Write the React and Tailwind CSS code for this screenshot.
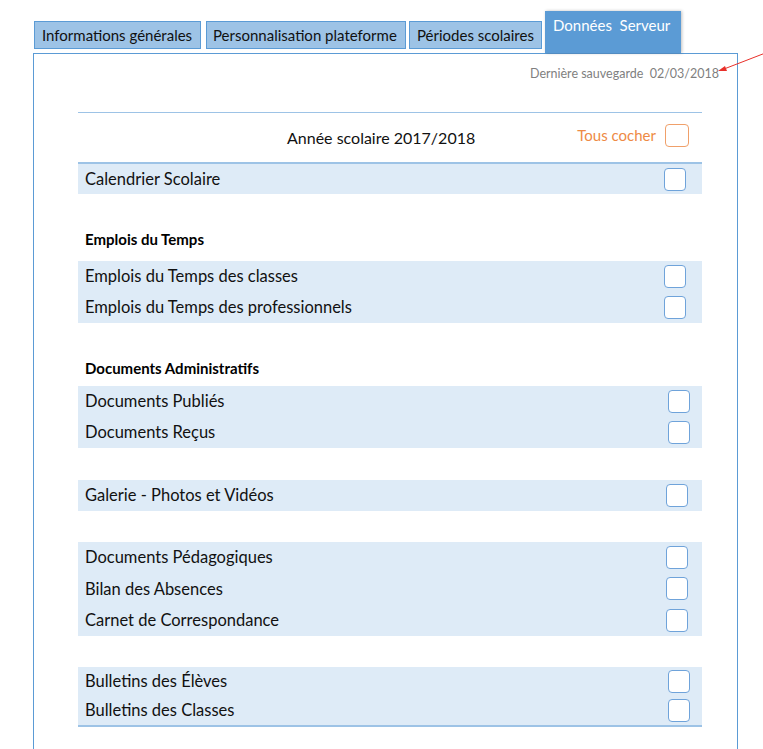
import React from "react";

const F = { fontFamily: "Lato, 'Liberation Sans', sans-serif" };

function Box({ orange = false, cls = "" }) {
  return (
    <div
      className={
        "shrink-0 rounded-[4px] bg-white " +
        (orange
          ? "w-[24px] h-[23px] border-[1.5px] border-[#f0a06a]"
          : "w-[22px] h-[23px] border-[1.5px] border-[#6fa3da]") +
        " " +
        cls
      }
    />
  );
}

function Row({ label, h = "h-[31px]", pr = "pr-[16px]" }) {
  return (
    <div className={"flex items-center justify-between pl-[7px] " + h + " " + pr}>
      <span className="text-[16.5px] text-[#111] leading-none">{label}</span>
      <Box />
    </div>
  );
}

function Block({ children, cls = "" }) {
  return <div className={"bg-[#deebf7] " + cls}>{children}</div>;
}

function Label({ children, pb }) {
  return (
    <div className={"pt-[37px] pl-[7px] " + pb}>
      <div className="h-[16px] flex items-center text-[15px] font-bold text-black leading-none">
        {children}
      </div>
    </div>
  );
}

export default function App() {
  return (
    <div className="relative w-[763px] h-[749px] overflow-hidden bg-white" style={F}>
      {/* Tabs */}
      <div className="flex items-start pl-[34px] pt-[11px] h-[53px]">
        <div className="mt-[10px] h-[28px] w-[167px] bg-[#9dc3e6] border border-[#5b9bd5] flex items-center pl-[7px] text-[15px] text-[#111] leading-none">
          Informations générales
        </div>
        <div className="ml-[5px] mt-[10px] h-[28px] w-[200px] bg-[#9dc3e6] border border-[#5b9bd5] flex items-center pl-[6px] text-[15px] text-[#111] leading-none">
          Personnalisation plateforme
        </div>
        <div className="ml-[3px] mt-[10px] h-[28px] w-[133px] bg-[#9dc3e6] border border-[#5b9bd5] flex items-center pl-[7px] text-[15px] text-[#111] leading-none">
          Périodes scolaires
        </div>
        <div className="ml-[3px] h-[42px] w-[136px] bg-[#5b9bd5] shadow-[1px_0_3px_rgba(0,0,0,0.25)] pl-[8px] pt-[7px] text-[15px] text-white leading-none">
          Données&nbsp; Serveur
        </div>
      </div>

      {/* Panel */}
      <div className="ml-[33px] w-[705px] h-[720px] border border-[#5b9bd5]">
        <div className="flex justify-end pr-[18px] pt-[12px] h-[58px]">
          <span className="text-[12.5px] text-[#7f7f7f] leading-[16px]">
            Dernière sauvegarde&nbsp; 02/03/2018
          </span>
        </div>

        <div className="ml-[44px] w-[624px]">
          {/* Header */}
          <div className="border-t border-[#9dc3e6] h-[52px] flex items-center border-b-2 border-b-[#9dc3e6]">
            <span className="pl-[209px] text-[16px] text-[#111] leading-none">
              Année scolaire 2017/2018
            </span>
            <span className="ml-auto text-[15px] text-[#ee8a45] leading-none -mt-[5px]">
              Tous cocher
            </span>
            <Box orange cls="ml-[9px] mr-[13px] -mt-[5px]" />
          </div>

          <Block>
            <Row label="Calendrier Scolaire" h="h-[30px]" />
          </Block>

          <Label pb="pb-[14px]">Emplois du Temps</Label>
          <Block>
            <Row label="Emplois du Temps des classes" />
            <Row label="Emplois du Temps des professionnels" />
          </Block>

          <Label pb="pb-[10px]">Documents Administratifs</Label>
          <Block>
            <Row label="Documents Publiés" pr="pr-[12px]" />
            <Row label="Documents Reçus" pr="pr-[12px]" />
          </Block>

          <div className="h-[32px]" />
          <Block>
            <Row label="Galerie - Photos et Vidéos" pr="pr-[14px]" />
          </Block>

          <div className="h-[31px]" />
          <Block>
            <Row label="Documents Pédagogiques" h="h-[31.3px]" pr="pr-[14px]" />
            <Row label="Bilan des Absences" h="h-[31.3px]" pr="pr-[14px]" />
            <Row label="Carnet de Correspondance" h="h-[31.3px]" pr="pr-[14px]" />
          </Block>

          <div className="h-[31px]" />
          <Block cls="border-b-2 border-[#9dc3e6]">
            <Row label="Bulletins des Élèves" h="h-[29px]" pr="pr-[12px]" />
            <Row label="Bulletins des Classes" h="h-[29px]" pr="pr-[12px]" />
          </Block>
        </div>
      </div>

      {/* Red arrow */}
      <svg className="absolute left-0 top-0 pointer-events-none" width="763" height="749">
        <line x1="768" y1="52" x2="724" y2="69" stroke="#e8302a" strokeWidth="1" />
        <polygon points="718,71 725,66 727,71" fill="#e8302a" />
      </svg>
    </div>
  );
}
